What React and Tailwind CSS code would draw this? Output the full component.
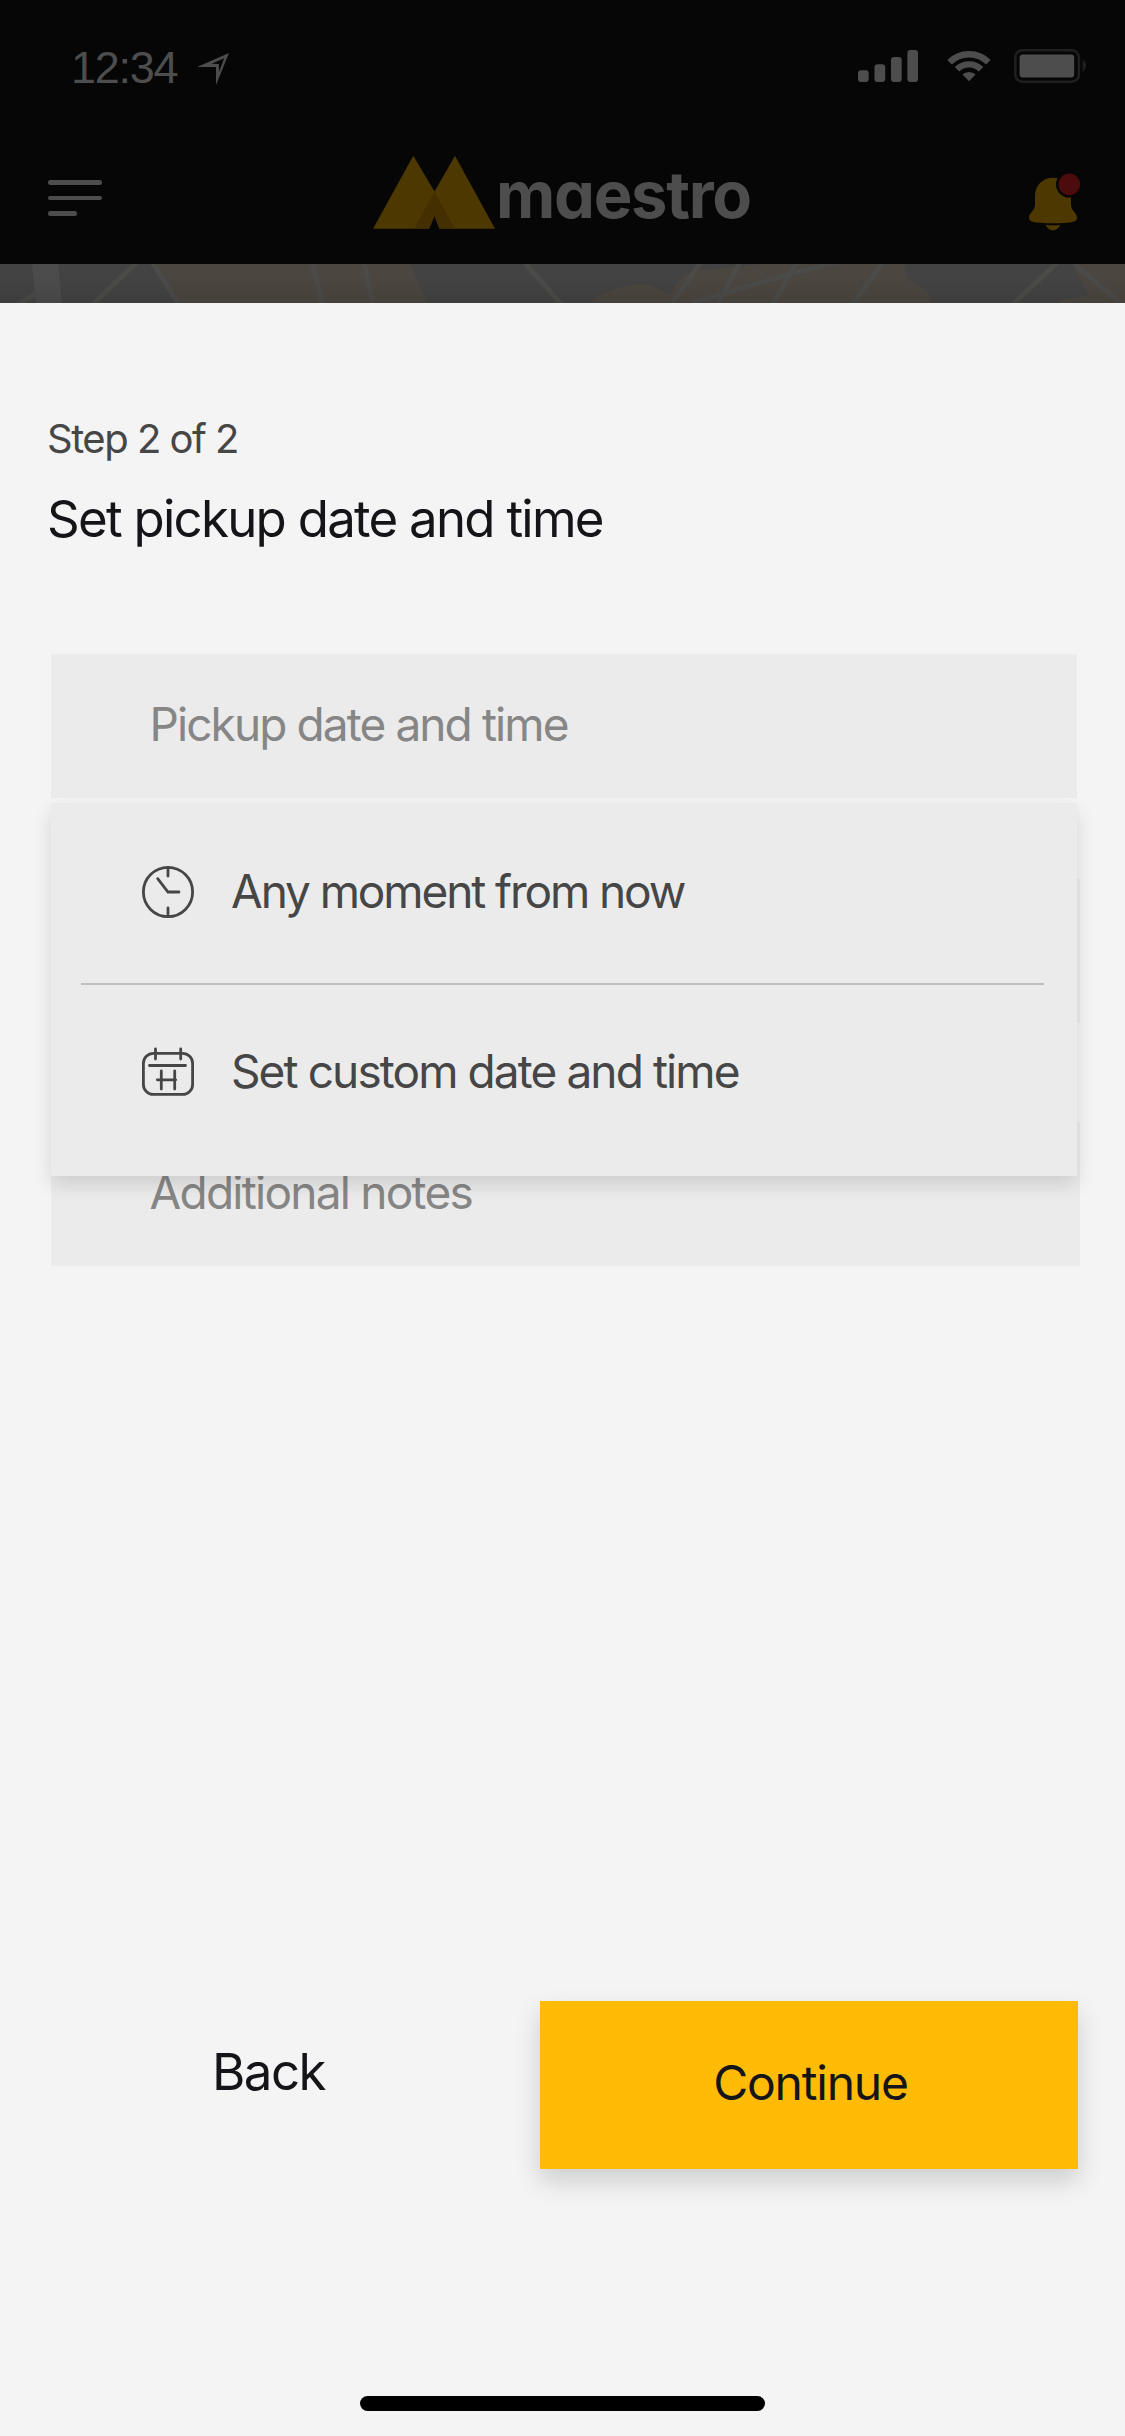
const F = "font-['Inter',sans-serif] whitespace-nowrap";

function StatusBar() {
  return (
    <div className="flex h-[132px] items-start justify-between pl-[71px] pr-[38px] text-[#4d4d4d]">
      <div className="flex pt-[42px]">
        <span className="w-[126px] font-['Liberation_Sans',sans-serif] text-[45px] leading-[52px] tracking-[-1.3px] whitespace-nowrap">12:34</span>
        <svg className="mt-[11px] h-[32px] w-[32px]" viewBox="0 0 32 32" fill="currentColor">
          <path fillRule="evenodd" d="M32 0 19 32V14H0ZM27.2 5.2 14.5 10.8 21.8 11 22 19Z" />
        </svg>
      </div>
      <div className="flex items-start pt-[49px]">
        <svg className="mt-[1px] h-[32px] w-[60px]" viewBox="0 0 60 32" fill="currentColor">
          <rect x="0" y="20.3" width="10.7" height="11.7" rx="3" />
          <rect x="16.5" y="14.3" width="10.7" height="17.7" rx="3" />
          <rect x="33" y="7" width="10.7" height="25" rx="3" />
          <rect x="49.4" y="0" width="10.7" height="32" rx="3" />
        </svg>
        <svg className="ml-[29px] mt-[2px] h-[31px] w-[44px]" viewBox="0 0 44 31" fill="none" stroke="currentColor" strokeWidth="6.4">
          <path d="M2.6 11.2a27.6 27.6 0 0 1 38.8 0" />
          <path d="M10 18.3a17 17 0 0 1 24 0" />
          <path d="M15.4 23.6a9.5 9.5 0 0 1 13.2 0L22 30.2Z" fill="currentColor" stroke="none" />
        </svg>
        <svg className="ml-[23px] h-[34px] w-[73px]" viewBox="0 0 73 34">
          <rect x="1.3" y="1.3" width="63.6" height="31.4" rx="7" fill="none" stroke="#1f1f1f" strokeWidth="2.6" />
          <rect x="5.6" y="5.6" width="54.6" height="23" rx="3" fill="#4d4d4d" />
          <path d="M68.6 10.5a7.5 7.5 0 0 1 0 12.5Z" fill="#1f1f1f" />
        </svg>
      </div>
    </div>
  );
}

function Header() {
  return (
    <div className="flex h-[132px] items-start justify-between pl-12 pr-[42px]">
      <div className="mt-12 flex w-[325px] flex-col gap-[11px]">
        <span className="h-[4.7px] w-[54px] rounded-full bg-[#4d4d4d]" />
        <span className="h-[4.7px] w-[54px] rounded-full bg-[#4d4d4d]" />
        <span className="h-[4.7px] w-[29px] rounded-full bg-[#4d4d4d]" />
      </div>
      <div className="mt-[23px] flex flex-1 items-start">
        <svg className="h-[74px] w-[122px] shrink-0" viewBox="0 0 122 74">
          <path d="M40.3 .7 61.5 36.5 82 .7 122 73.7H66.5L61.5 61 56 73.7H0Z" fill="#4d3900" />
          <path d="M61.5 36.5 41 73.7H56L61.5 61 66.5 73.7H82Z" fill="#432f00" />
        </svg>
        <span className="ml-px font-['Inter',sans-serif] text-[65px] leading-[80px] font-bold tracking-[-1.3px] text-[#4d4d4d] [font-feature-settings:'cv11'] whitespace-nowrap">maestro</span>
      </div>
      <svg className="mt-[38px] h-[62px] w-[54px]" viewBox="0 0 54 62">
        <path d="M24 7.7C34 7.7 42 15 42 26V34C42 42 48 42 48 48 48 53 37 53.2 24 53.2S0 53 0 48C0 42 6 42 6 34V26C6 15 14 7.7 24 7.7Z" fill="#4d3900" />
        <path d="M16.7 54.7Q24 56 31 54.7C30 58 27 60.3 24 60.3S18 58 16.7 54.7Z" fill="#4d3900" />
        <circle cx="40.3" cy="14.3" r="13.3" fill="#060606" />
        <circle cx="40.3" cy="14.3" r="10.8" fill="#4c0b0d" />
      </svg>
    </div>
  );
}

function MapStrip() {
  return (
    <svg className="block h-[39px] w-full" viewBox="0 0 1125 39">
      <defs>
        <linearGradient id="edge" x1="0" y1="0" x2="0" y2="1">
          <stop offset="0.3" stopColor="#000" stopOpacity="0" />
          <stop offset="1" stopColor="#000" stopOpacity="0.09" />
        </linearGradient>
      </defs>
      <rect width="1125" height="39" fill="#434343" />
      <g fill="#4c4640">
        <path d="M156 0H411L427 39H181Z" />
        <path d="M589 39C605 25 640 15 655 23 665 29 668 32 672 28 680 12 690 5 715 5L760 0H905C902 25 931 17 931 39Z" />
        <path d="M1072 0H1125V39H1058C1065 33 1075 34 1089 32Z" />
      </g>
      <g stroke="#4b4b4a" strokeWidth="5" fill="none">
        <path d="M32 0H58L62 39H36Z" fill="#4c4c4c" stroke="none" />
        <path d="M16 41 36 30M137-2 92 41M152-2 179 41M312-2 323 41M364-2 373 41M701-2 671 41M740-2 717 41M692 39 790 10 838-2M797-2 772 41M883-2 852 41M1058-2 1012 41M1072-2 1123 41M524-2 562 41" />
      </g>
      <rect width="1125" height="39" fill="url(#edge)" />
    </svg>
  );
}

function Field({ children, className = "" }) {
  return (
    <div className={`flex h-[144px] items-center bg-[#ebebeb] pb-[3px] pl-[98.5px] text-[46px] text-[#868686] ${F} ${className}`}>{children}</div>
  );
}

function ClockIcon() {
  return (
    <svg className="h-[52px] w-[52px]" viewBox="0 0 52 52" fill="none" stroke="#464646" strokeWidth="2.8" strokeLinecap="round">
      <circle cx="26" cy="26" r="24.6" />
      <path d="M26 2V10M26 42V50M15.7 12.7 26 26H37" />
    </svg>
  );
}

function CalendarIcon() {
  return (
    <svg className="h-[52px] w-[52px]" viewBox="0 0 52 52" fill="none" stroke="#464646" strokeWidth="2.8" strokeLinecap="round">
      <rect x="1.4" y="7.4" width="49.2" height="41" rx="10" />
      <path d="M13.5 3V13M38.7 3V13M7.5 19.5H43.5M19.3 25V43M32.7 25V43M15.3 33.8H33.7" />
    </svg>
  );
}

export default function App() {
  return (
    <div className="flex h-[2436px] w-[1125px] flex-col bg-[#f4f4f4]">
      <header className="bg-[#060606]">
        <StatusBar />
        <Header />
      </header>
      <MapStrip />
      <main className="flex flex-1 flex-col">
        <div className={`pl-[47px] ${F}`}>
          <p className="mt-[112px] text-[40px] leading-[48px] tracking-[-1.5px] text-[#464646]">Step 2 of 2</p>
          <h1 className="mt-[26px] text-[51px] leading-[60px] tracking-[-1.75px] text-[#151519]">Set pickup date and time</h1>
        </div>
        <section className="relative mt-[105px] ml-[51px] flex w-[1029px] flex-col">
          <Field className="w-[1026px] tracking-[-1.9px]">Pickup date and time</Field>
          <Field className="mt-[81px]" />
          <Field className="mt-[99px] tracking-[-1.75px]">Additional notes</Field>
          <div className={`absolute top-[149px] left-0 flex h-[373px] w-[1026px] flex-col bg-[#ebebeb] text-[46px] text-[#464646] shadow-[0_9px_18px_rgba(0,0,0,0.12)] ${F}`}>
            <div className="flex h-[180px] items-center gap-[37px] pb-[3px] pl-[91px]">
              <ClockIcon />
              <span className="pb-px tracking-[-2.1px]">Any moment from now</span>
            </div>
            <div className="ml-[30px] h-[2px] w-[963px] bg-[#bfbfbf]" />
            <div className="flex h-[176px] items-center gap-[37px] pb-[3px] pl-[91px]">
              <CalendarIcon />
              <span className="pb-px tracking-[-1.9px]">Set custom date and time</span>
            </div>
          </div>
        </section>
        <div className={`mt-[735px] flex text-[#151519] ${F}`}>
          <button className="h-[144px] w-[540px] pr-[3px] pb-px text-[51px] tracking-[-1.5px]">Back</button>
          <button className="h-[168px] w-[538px] bg-[#ffbb05] pb-[4px] pl-[3px] text-[48px] tracking-[-1.2px] shadow-[0_12px_24px_rgba(0,0,0,0.16)]">Continue</button>
        </div>
        <div className="mx-auto mt-auto mb-[25px] h-[15px] w-[405px] rounded-full bg-black" />
      </main>
    </div>
  );
}
